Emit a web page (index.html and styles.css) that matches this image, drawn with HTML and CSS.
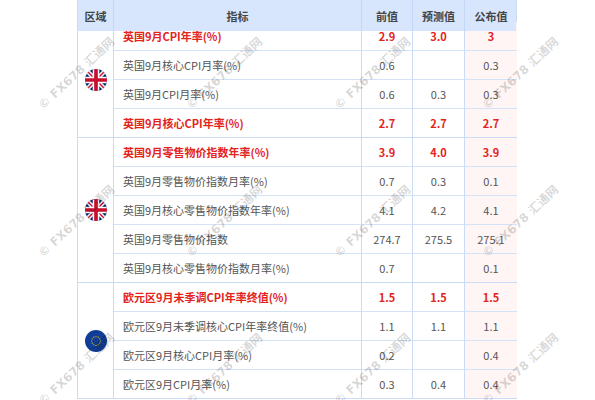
FILE: index.html
```html
<!DOCTYPE html>
<html lang="zh-CN">
<head>
<meta charset="utf-8">
<title>经济数据</title>
<link rel="stylesheet" href="styles.css">
</head>
<body>
<div class="page">
  <div class="table">
    <div class="head">
      <div class="hc">区域</div>
      <div class="hc">指标</div>
      <div class="hc">前值</div>
      <div class="hc">预测值</div>
      <div class="hc">公布值</div>
    </div>
    <div class="body">
      <!-- group 1 -->
      <div class="region span4"><svg class="flag" viewBox="0 0 60 60"><defs><clipPath id="c1"><circle cx="30" cy="30" r="30"/></clipPath></defs><g clip-path="url(#c1)"><rect width="60" height="60" fill="#012169"/><path d="M0 0L60 60M60 0L0 60" stroke="#fff" stroke-width="12"/><path d="M0 0L60 60M60 0L0 60" stroke="#c8102e" stroke-width="4"/><path d="M30 0V60M0 30H60" stroke="#fff" stroke-width="18"/><path d="M30 0V60M0 30H60" stroke="#c8102e" stroke-width="10"/></g></svg></div>
      <div class="c name hot">英国9月CPI年率(%)</div><div class="c v hot">2.9</div><div class="c v hot">3.0</div><div class="c v act hot">3</div>
      <div class="c name">英国9月核心CPI月率(%)</div><div class="c v">0.6</div><div class="c v"></div><div class="c v act">0.3</div>
      <div class="c name">英国9月CPI月率(%)</div><div class="c v">0.6</div><div class="c v">0.3</div><div class="c v act">0.3</div>
      <div class="c name hot last">英国9月核心CPI年率(%)</div><div class="c v hot last">2.7</div><div class="c v hot last">2.7</div><div class="c v act hot last">2.7</div>
      <!-- group 2 -->
      <div class="region span5"><svg class="flag" viewBox="0 0 60 60"><defs><clipPath id="c2"><circle cx="30" cy="30" r="30"/></clipPath></defs><g clip-path="url(#c2)"><rect width="60" height="60" fill="#012169"/><path d="M0 0L60 60M60 0L0 60" stroke="#fff" stroke-width="12"/><path d="M0 0L60 60M60 0L0 60" stroke="#c8102e" stroke-width="4"/><path d="M30 0V60M0 30H60" stroke="#fff" stroke-width="18"/><path d="M30 0V60M0 30H60" stroke="#c8102e" stroke-width="10"/></g></svg></div>
      <div class="c name hot">英国9月零售物价指数年率(%)</div><div class="c v hot">3.9</div><div class="c v hot">4.0</div><div class="c v act hot">3.9</div>
      <div class="c name">英国9月零售物价指数月率(%)</div><div class="c v">0.7</div><div class="c v">0.3</div><div class="c v act">0.1</div>
      <div class="c name">英国9月核心零售物价指数年率(%)</div><div class="c v">4.1</div><div class="c v">4.2</div><div class="c v act">4.1</div>
      <div class="c name">英国9月零售物价指数</div><div class="c v">274.7</div><div class="c v">275.5</div><div class="c v act">275.1</div>
      <div class="c name last">英国9月核心零售物价指数月率(%)</div><div class="c v last">0.7</div><div class="c v last"></div><div class="c v act last">0.1</div>
      <!-- group 3 -->
      <div class="region span4"><svg class="flag" viewBox="0 0 60 60"><circle cx="30" cy="30" r="30" fill="#123d96"/><g fill="#f5d000"><circle cx="30" cy="18" r="1.6"/><circle cx="36" cy="19.6" r="1.6"/><circle cx="40.4" cy="24" r="1.6"/><circle cx="42" cy="30" r="1.6"/><circle cx="40.4" cy="36" r="1.6"/><circle cx="36" cy="40.4" r="1.6"/><circle cx="30" cy="42" r="1.6"/><circle cx="24" cy="40.4" r="1.6"/><circle cx="19.6" cy="36" r="1.6"/><circle cx="18" cy="30" r="1.6"/><circle cx="19.6" cy="24" r="1.6"/><circle cx="24" cy="19.6" r="1.6"/></g></svg></div>
      <div class="c name hot">欧元区9月未季调CPI年率终值(%)</div><div class="c v hot">1.5</div><div class="c v hot">1.5</div><div class="c v act hot">1.5</div>
      <div class="c name">欧元区9月未季调核心CPI年率终值(%)</div><div class="c v">1.1</div><div class="c v">1.1</div><div class="c v act">1.1</div>
      <div class="c name">欧元区9月核心CPI月率(%)</div><div class="c v">0.2</div><div class="c v"></div><div class="c v act">0.4</div>
      <div class="c name last">欧元区9月CPI月率(%)</div><div class="c v last">0.3</div><div class="c v last">0.4</div><div class="c v act last">0.4</div>
    </div>
  </div>
  <div class="marks">
    <span class="wm">© FX678 汇通网</span><span class="wm">© FX678 汇通网</span><span class="wm">© FX678 汇通网</span><span class="wm">© FX678 汇通网</span><span class="wm">© FX678 汇通网</span>
    <span class="wm">© FX678 汇通网</span><span class="wm">© FX678 汇通网</span><span class="wm">© FX678 汇通网</span><span class="wm">© FX678 汇通网</span><span class="wm">© FX678 汇通网</span>
    <span class="wm">© FX678 汇通网</span><span class="wm">© FX678 汇通网</span><span class="wm">© FX678 汇通网</span><span class="wm">© FX678 汇通网</span><span class="wm">© FX678 汇通网</span>
  </div>
</div>
</body>
</html>
```
FILE: styles.css
```css
html, body {
  margin: 0;
  padding: 0;
  background: #fff;
}
.page {
  position: relative;
  width: 595px;
  height: 400px;
  overflow: hidden;
  font-family: "Noto Sans CJK SC", "Noto Sans", sans-serif;
  font-size: 11px;
  color: #555;
}
.table {
  margin-left: 77px;
  width: 440px;
  box-sizing: border-box;
  border-left: 1px solid #c9dbf6;
  border-right: 1px solid #c9dbf6;
}
.head {
  position: relative;
  z-index: 2;
  display: grid;
  grid-template-columns: 36px 248px 51px 52px 52px;
  height: 31px;
  background: #d7e6fc;
}
.hc {
  display: flex;
  align-items: center;
  justify-content: center;
  font-weight: bold;
  color: #444;
  border-right: 1px solid #c4d8f6;
}
.hc:last-child {
  border-right: none;
}
.body {
  margin-top: -9px;
  display: grid;
  grid-template-columns: 36px 248px 51px 52px 52px;
  grid-auto-rows: 29px;
}
.region {
  display: flex;
  align-items: center;
  justify-content: center;
  border-right: 1px solid #c9dbf6;
  border-bottom: 1px solid #c9dbf6;
}
.span4 { grid-row: span 4; }
.span5 { grid-row: span 5; }
.flag {
  width: 22px;
  height: 22px;
  display: block;
  margin-left: 1px;
}
.c {
  display: flex;
  align-items: center;
  box-sizing: border-box;
  border-bottom: 1px solid #d4e2f8;
  border-right: 1px solid #c9dbf6;
  line-height: 1;
}
.c.last {
  border-bottom-color: #c9dbf6;
}
.c.act {
  border-right: none;
  background: #fff5f5;
}
.name {
  padding-left: 9px;
}
.v {
  justify-content: center;
}
.hot {
  color: #e3241b;
  font-weight: bold;
}
.marks {
  position: absolute;
  left: 1px;
  top: -2px;
  z-index: 5;
  display: grid;
  grid-template-columns: repeat(5, 148px);
  grid-template-rows: repeat(3, 148px);
  pointer-events: none;
}
.wm {
  display: flex;
  align-items: center;
  justify-content: center;
  font-family: "DejaVu Sans", "Noto Sans CJK SC", sans-serif;
  font-size: 12px;
  font-weight: bold;
  color: rgba(0, 0, 0, 0.16);
  white-space: nowrap;
  transform: rotate(-43deg);
}
```
